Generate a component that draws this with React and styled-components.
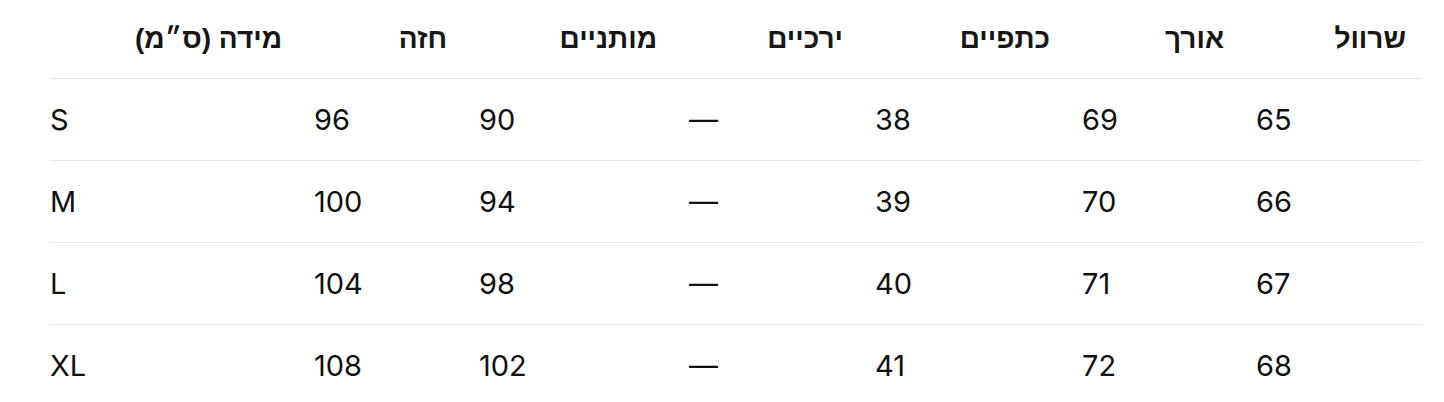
import React from "react";
import styled, { createGlobalStyle } from "styled-components";

const Global = createGlobalStyle`
  html, body { margin: 0; padding: 0; background: #fff; }
  body { font-family: Inter, "Liberation Sans", sans-serif; color: #111; }
`;

const Wrap = styled.div`
  padding: 0 22px 0 50px;
`;

const Table = styled.table`
  width: 1372px;
  border-collapse: collapse;
  table-layout: fixed;
`;

const Col = styled.col`
  width: ${(p) => p.$w}px;
`;

const HeadRow = styled.tr`
  border-bottom: 1px solid #e3e3e3;
`;

const Row = styled.tr`
  border-bottom: 1px solid #e8e8e8;
`;

const Th = styled.th`
  height: 78px;
  padding: 0 16px 0 ${(p) => (p.$first ? 0 : 16)}px;
  font-family: "Liberation Sans", Arial, sans-serif;
  font-weight: 700;
  font-size: 28px;
  text-align: right;
  direction: rtl;
  vertical-align: middle;
  color: #161616;
  white-space: nowrap;
`;

const Td = styled.td`
  height: 81px;
  padding: 0 16px 0 ${(p) => (p.$first ? 0 : 16)}px;
  font-family: Inter, "Liberation Sans", sans-serif;
  font-weight: 400;
  font-size: 29px;
  text-align: left;
  vertical-align: middle;
  color: #111;
`;

const widths = [248, 165, 210, 186, 207, 174, 182];
const headers = ["מידה (ס\u05F4מ)", "חזה", "מותניים", "ירכיים", "כתפיים", "אורך", "שרוול"];
const rows = [
  ["S", "96", "90", "—", "38", "69", "65"],
  ["M", "100", "94", "—", "39", "70", "66"],
  ["L", "104", "98", "—", "40", "71", "67"],
  ["XL", "108", "102", "—", "41", "72", "68"],
];

export default function App() {
  return (
    <>
      <Global />
      <Wrap>
        <Table>
          <colgroup>
            {widths.map((w, i) => (
              <Col key={i} $w={w} />
            ))}
          </colgroup>
          <thead>
            <HeadRow>
              {headers.map((h, i) => (
                <Th key={i} $first={i === 0}>
                  {h}
                </Th>
              ))}
            </HeadRow>
          </thead>
          <tbody>
            {rows.map((r, ri) => (
              <Row key={ri}>
                {r.map((c, ci) => (
                  <Td key={ci} $first={ci === 0}>
                    {c}
                  </Td>
                ))}
              </Row>
            ))}
          </tbody>
        </Table>
      </Wrap>
    </>
  );
}
